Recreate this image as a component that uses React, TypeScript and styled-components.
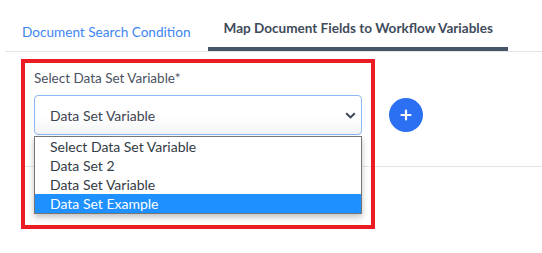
import React from "react";
import styled, {createGlobalStyle} from "styled-components";

const GlobalStyle = createGlobalStyle`
  body {
    margin: 0;
    background: #fff;
    font-family: Lato, "Noto Sans", sans-serif;
    font-size: 13.5px;
  }
  * { box-sizing: border-box; }
`;

const options = ["Select Data Set Variable", "Data Set 2", "Data Set Variable", "Data Set Example"];

export default function App() {
  return (
    <>
      <GlobalStyle />
      <Page>
        <TabBar>
          <Tab>Document Search Condition</Tab>
          <Tab active>Map Document Fields to Workflow Variables</Tab>
        </TabBar>

        <FormRow>
          <Field>
            <Label>Select Data Set Variable*</Label>
            <Select>
              <span>Data Set Variable</span>
              <svg width="11" height="7" viewBox="0 0 11 7">
                <path d="M1.2 1.2 L5.5 5.4 L9.8 1.2" fill="none" stroke="#3a4654" strokeWidth="2" />
              </svg>
            </Select>
            <OptionList>
              {options.map((o, i) => (
                <Option key={o} selected={i === options.length - 1}>
                  {o}
                </Option>
              ))}
            </OptionList>
            <Highlight />
          </Field>
          <AddButton aria-label="Add">
            <svg width="12" height="12" viewBox="0 0 12 12">
              <path d="M6 1.5 V10.5 M1.5 6 H10.5" stroke="#fff" strokeWidth="2.2" strokeLinecap="round" />
            </svg>
          </AddButton>
        </FormRow>

        <Divider />
      </Page>
    </>
  );
}

const Page = styled.div`
  width: 542px;
  height: 253px;
  overflow: hidden;
`;

const TabBar = styled.div`
  display: flex;
  margin-left: 5px;
  height: 52px;
  border-bottom: 1px solid #e2e4e7;
`;

const Tab = styled.div<{active?: boolean}>`
  display: flex;
  align-items: center;
  height: 51px;
  padding: ${({active}) => (active ? "9px 15px 0 16px" : "12px 17px 0 17px")};
  border-bottom: ${({active}) => (active ? "4px solid #465567" : "none")};
  color: ${({active}) => (active ? "#3f4b5b" : "#3d85f5")};
  font-weight: ${({active}) => (active ? 700 : 400)};
  font-size: ${({active}) => (active ? "13.55px" : "13.6px")};
  white-space: nowrap;
`;

const FormRow = styled.div`
  display: flex;
  align-items: flex-end;
  padding: 16px 0 0 34px;
`;

const Field = styled.div`
  position: relative;
  display: flex;
  flex-direction: column;
  gap: 7px;
  width: 328px;
`;

const Label = styled.label`
  line-height: 20px;
  color: #4a5261;
`;

const Select = styled.div`
  display: flex;
  align-items: center;
  justify-content: space-between;
  height: 40px;
  padding: 0 5px 0 15px;
  border: 1px solid #8ab8f7;
  border-radius: 4px;
  background: linear-gradient(#ffffff 55%, #f2f3f4);
  color: #3c4450;
  font-size: 14px;
`;

const OptionList = styled.div`
  position: absolute;
  top: calc(100% + 1px);
  left: 0;
  width: 328px;
  border: 1px solid #767676;
  background: #fff;
  box-shadow: 0 3px 6px rgba(0, 0, 0, 0.25);
  z-index: 2;
`;

const Option = styled.div<{selected?: boolean}>`
  height: 19px;
  line-height: 19px;
  padding-left: 15px;
  background: ${({selected}) => (selected ? "#1e90ff" : "transparent")};
  color: ${({selected}) => (selected ? "#fff" : "#333a44")};
  font-size: 14px;
`;

const Highlight = styled.div`
  position: absolute;
  top: -9px;
  left: -13px;
  width: 354px;
  height: 170px;
  border: 4px solid #ec1c24;
  pointer-events: none;
  z-index: 3;
`;

const AddButton = styled.button`
  display: flex;
  align-items: center;
  justify-content: center;
  width: 34px;
  height: 34px;
  margin: 0 0 3px 27px;
  padding: 0;
  border: none;
  border-radius: 50%;
  background: #2b6ff2;
  cursor: pointer;
`;

const Divider = styled.div`
  margin: 31px 0 0 21px;
  height: 1px;
  background: #e3e4e6;
`;
